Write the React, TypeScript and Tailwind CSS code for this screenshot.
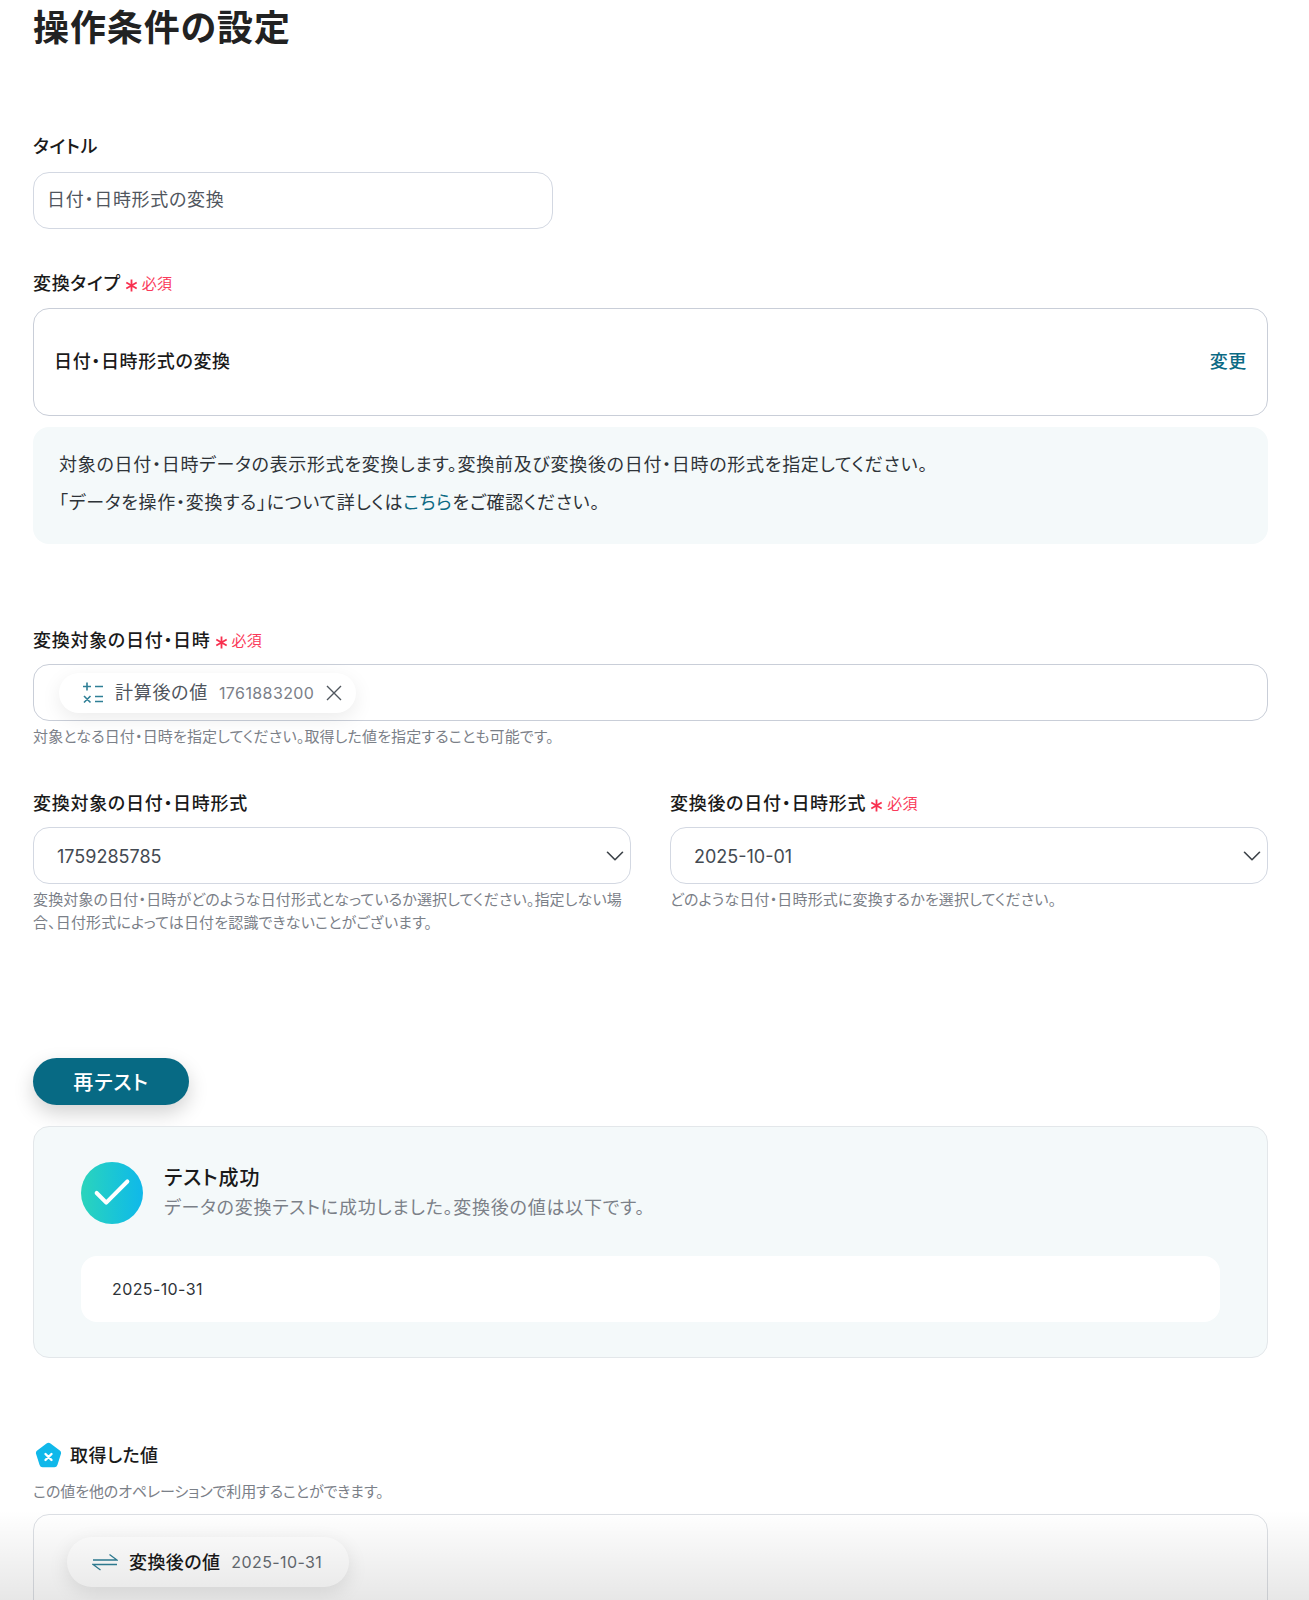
import { Check, ChevronDown } from 'lucide-react';

const Required = () => (
  <span className="ml-[4px] -mt-[1px] inline-flex items-center text-[15px] font-normal leading-none tracking-[0.3px] text-[#fa3a5a]">
    <svg className="mr-[4px] mt-[3px]" width="13" height="13" viewBox="0 0 13 13" stroke="#f8304f" strokeWidth="1.8">
      <path d="M6.500 0.500v12M1.300 3.500l10.400 6M11.700 3.500l-10.400 6" />
    </svg>
    必須
  </span>
);

const Label = ({ text, required }: { text: string; required?: boolean }) => (
  <div className="flex h-6 items-center pt-[2px] text-[18px] font-medium leading-6 tracking-[0.04em] text-[#1a1a1a]">
    {text}
    {required && <Required />}
  </div>
);

const SelectBox = ({ value }: { value: string }) => (
  <div className="mt-[12px] flex h-[57px] items-center justify-between rounded-2xl border border-[#d3d8e2] pl-[23px] text-[18px] text-[#444a52]">
    <span className="pt-[2px]">{value}</span>
    <ChevronDown className="h-[30px] w-[30px] text-[#3c4248]" strokeWidth={1.3} />
  </div>
);

const CalcIcon = () => (
  <svg width="24" height="24" viewBox="0 0 24 24" fill="none" stroke="#2f7f96" strokeWidth="1.6">
    <path d="M6 1.500v8M2 5.500h8M14 5.500h8" />
    <path d="M3 15l6.500 6.500M9.500 15L3 21.500M14 15.500h8M14 20.500h8" />
  </svg>
);

const CloseIcon = () => (
  <svg width="16" height="16" viewBox="0 0 16 16" fill="none" stroke="#50565e" strokeWidth="1.4">
    <path d="M1 1l14 14M15 1L1 15" />
  </svg>
);

const SwapIcon = () => (
  <svg width="26" height="18" viewBox="0 0 26 18" fill="none" stroke="#2f7f96" strokeWidth="1.3">
    <path d="M1 7h24L17.500 1.500" />
    <path d="M25 11.500H1L8.500 17" />
  </svg>
);

export default function App() {
  return (
    <div className="relative h-[1600px] overflow-hidden bg-white pl-[33px] pr-[41px] font-['Inter','Noto_Sans_CJK_JP',sans-serif] [font-feature-settings:'palt'] text-[#1a1a1a]">
      <h1 className="pt-[6px] text-[36px] font-bold leading-[44px] tracking-[0.025em] text-[#222]">操作条件の設定</h1>

      <div className="mt-[84px]">
        <Label text="タイトル" />
        <div className="mt-[14px] flex h-[57px] w-[520px] items-center rounded-2xl border border-[#d3d8e2] pl-[13px] text-[18px] tracking-[0.04em] text-[#50565e]">
          <span className="-mt-[2px]">日付・日時形式の変換</span>
        </div>
      </div>

      <div className="mt-[42px]">
        <Label text="変換タイプ" required />
        <div className="mt-[13px] flex h-[108px] items-center justify-between rounded-2xl border border-[#c9ced8] px-[20px] pb-[2px] tracking-[0.04em]">
          <span className="text-[18px] font-medium">日付・日時形式の変換</span>
          <span className="text-[18px] font-medium text-[#0b6a84]">変更</span>
        </div>
        <div className="mt-[11px] rounded-2xl bg-[#f4f9fa] px-[26px] pb-[22px] pt-[19px] text-[18px] leading-[38px] tracking-[0.04em] text-[#2e3338]">
          <p>対象の日付・日時データの表示形式を変換します。変換前及び変換後の日付・日時の形式を指定してください。</p>
          <p>
            「データを操作・変換する」について詳しくは<span className="text-[#0b6a84]">こちら</span>をご確認ください。
          </p>
        </div>
      </div>

      <div className="mt-[84px]">
        <Label text="変換対象の日付・日時" required />
        <div className="mt-[12px] flex h-[57px] items-center rounded-2xl border border-[#c9ced8] pl-[25px]">
          <div className="flex h-[40px] w-[297px] items-center rounded-full bg-white pl-[22px] shadow-[0_6px_20px_rgba(0,0,0,0.08)]">
            <CalcIcon />
            <span className="ml-[10px] text-[18px] tracking-[0.04em] text-[#50565e]">計算後の値</span>
            <span className="ml-[11px] text-[16px] tracking-[0.4px] text-[#7b8088]">1761883200</span>
            <span className="ml-[12px]">
              <CloseIcon />
            </span>
          </div>
        </div>
        <p className="mt-[5px] text-[15px] leading-[22px] tracking-[0.15px] text-[#7b8088]">
          対象となる日付・日時を指定してください。取得した値を指定することも可能です。
        </p>
      </div>

      <div className="mt-[43px] grid grid-cols-2 gap-x-[39px]">
        <div>
          <Label text="変換対象の日付・日時形式" />
          <SelectBox value="1759285785" />
          <p className="mt-[4px] text-[15px] leading-[23px] tracking-[0.15px] text-[#7b8088]">
            変換対象の日付・日時がどのような日付形式となっているか選択してください。指定しない場合、日付形式によっては日付を認識できないことがございます。
          </p>
        </div>
        <div>
          <Label text="変換後の日付・日時形式" required />
          <SelectBox value="2025-10-01" />
          <p className="mt-[4px] text-[15px] leading-[23px] tracking-[0.15px] text-[#7b8088]">
            どのような日付・日時形式に変換するかを選択してください。
          </p>
        </div>
      </div>

      <button className="mt-[124px] block h-[47px] w-[156px] rounded-full bg-[#076a84] pt-[2px] text-[20px] font-medium tracking-[1px] text-white shadow-[0_8px_20px_rgba(0,0,0,0.18)]">
        再テスト
      </button>

      <div className="mt-[21px] h-[232px] rounded-2xl border border-[#e3e7ea] bg-[#f4f9fa] px-[47px] pt-[35px]">
        <div className="flex items-center">
          <div className="flex h-[62px] w-[62px] shrink-0 items-center justify-center rounded-full bg-gradient-to-r from-[#2bd4bb] to-[#10b8ea]">
            <Check className="h-[46px] w-[46px] shrink-0 text-white" strokeWidth={2.1} />
          </div>
          <div className="ml-[21px]">
            <div className="text-[20px] font-medium leading-[28px] tracking-[0.05em] text-[#1a1a1a]">テスト成功</div>
            <div className="mt-[2px] text-[18px] leading-[28px] tracking-[0.75px] text-[#7b8088]">データの変換テストに成功しました。変換後の値は以下です。</div>
          </div>
        </div>
        <div className="mt-[32px] flex h-[66px] items-center rounded-2xl bg-white pl-[31px] text-[16px] tracking-[0.4px] text-[#2e3338]">
          2025-10-31
        </div>
      </div>

      <div className="mt-[84px] flex items-center">
        <svg className="ml-[2px]" width="27" height="27" viewBox="0 0 27 27">
          <path d="M11.500 1.600a3.200 3.200 0 0 1 4 0l9.300 7a3.200 3.200 0 0 1 1.100 3.500l-3.500 11a3.200 3.200 0 0 1-3 2.200H7.600a3.200 3.200 0 0 1-3-2.200l-3.500-11a3.200 3.200 0 0 1 1.100-3.500z" fill="#10b8ea" />
          <path d="M10.500 12l6 6M16.500 12l-6 6" stroke="#fff" strokeWidth="2.400" strokeLinecap="round" />
        </svg>
        <span className="ml-[8px] text-[18px] font-medium tracking-[0.4px] text-[#1a1a1a]">取得した値</span>
      </div>
      <p className="mt-[12px] text-[15px] leading-[22px] tracking-[-0.1px] text-[#7b8088]">この値を他のオペレーションで利用することができます。</p>
      <div className="mt-[11px] h-[140px] rounded-2xl border border-[#dcdfe4] pl-[33px] pt-[22px]">
        <div className="flex h-[50px] w-[282px] items-center rounded-full bg-white pl-[25px] shadow-[0_6px_20px_rgba(0,0,0,0.1)]">
          <SwapIcon />
          <span className="ml-[11px] text-[18px] font-medium tracking-[0.4px] text-[#1a1a1a]">変換後の値</span>
          <span className="ml-[11px] text-[16px] tracking-[0.4px] text-[#666b72]">2025-10-31</span>
        </div>
      </div>

      <div className="pointer-events-none absolute inset-x-0 bottom-0 h-[90px] bg-gradient-to-b from-transparent to-[#00000018]" />
    </div>
  );
}
